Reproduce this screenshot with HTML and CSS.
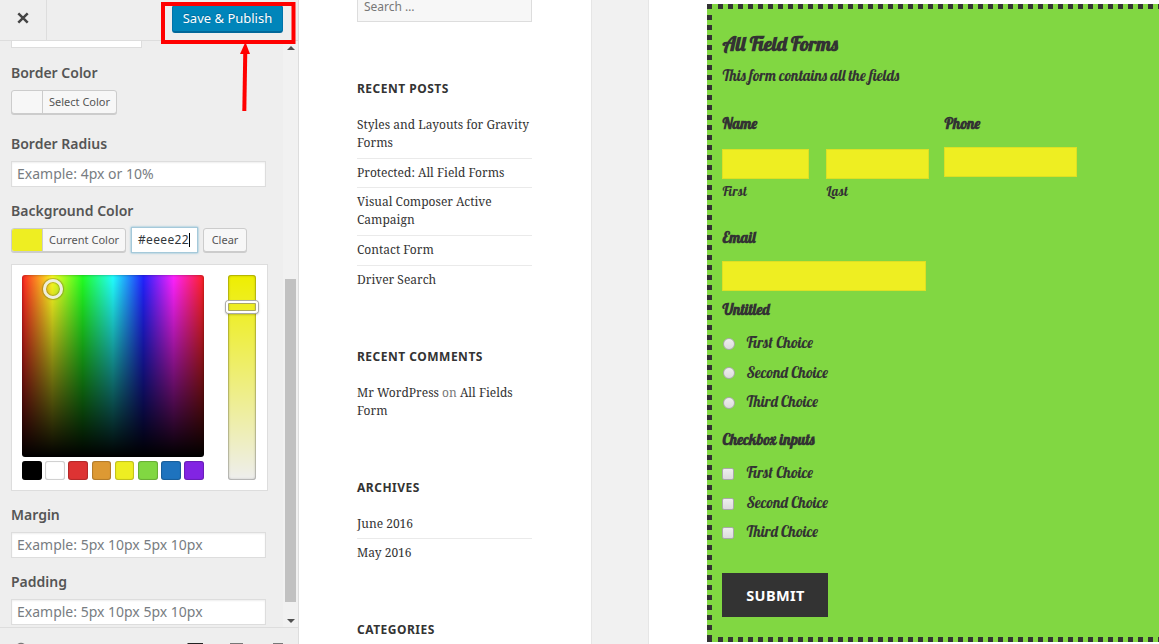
FILE: index.html
```
<!DOCTYPE html>
<html lang="en">
<head>
<meta charset="utf-8">
<title>Customizer</title>
<link rel="stylesheet" href="styles.css">
</head>
<body>
<div class="app">
  <aside class="panel">
    <header class="panel-head">
      <div class="close"><svg width="12" height="12" viewBox="0 0 12 12"><path d="M1.3 1.3 10.7 10.7M10.7 1.3 1.3 10.7" stroke="#444" stroke-width="2.5"/></svg></div>
      <button class="save">Save &amp; Publish</button>
    </header>
    <div class="panel-body">
      <div class="controls">
        <div class="select-end"></div>
        <div class="label l1">Border Color</div>
        <div class="color-row"><div class="color-btn"><i class="chip"></i><span>Select Color</span></div></div>
        <div class="label l2">Border Radius</div>
        <div class="field">Example: 4px or 10%</div>
        <div class="label l3">Background Color</div>
        <div class="color-row">
          <div class="color-btn current"><i class="chip yellow"></i><span>Current Color</span></div>
          <div class="hex">#eeee22<i class="caret"></i></div>
          <div class="clear">Clear</div>
        </div>
        <div class="picker">
          <div class="picker-left">
            <div class="square"><i class="handle"></i></div>
            <div class="palette">
              <i class="c-black"></i><i class="c-white"></i><i class="c-red"></i><i class="c-orange"></i><i class="c-yellow"></i><i class="c-green"></i><i class="c-blue"></i><i class="c-purple"></i>
            </div>
          </div>
          <div class="strip"><i class="slider"></i></div>
        </div>
        <div class="label l4">Margin</div>
        <div class="field">Example: 5px 10px 5px 10px</div>
        <div class="label l5">Padding</div>
        <div class="field">Example: 5px 10px 5px 10px</div>
      </div>
      <div class="scrollbar">
        <svg class="up" width="8" height="4" viewBox="0 0 8 4"><path d="M0 4 4 0 8 4Z" fill="#505050"/></svg>
        <div class="thumb"></div>
        <svg width="8" height="4" viewBox="0 0 8 4"><path d="M0 0H8L4 4Z" fill="#505050"/></svg>
      </div>
    </div>
    <footer class="panel-foot">
      <svg width="298" height="16" viewBox="0 0 298 16"><path d="M17.5 16Q21 13.5 24.5 16Z" fill="#777"/><path d="M187.5 15H203V16H187.5Z" fill="#222"/><path d="M230 15H243V16H230Z" fill="#777"/><path d="M273 15H283V16H273Z" fill="#777"/></svg>
    </footer>
  </aside>
  <section class="sidebar">
    <div class="search">Search …</div>
    <h2 class="t1">Recent Posts</h2>
    <ul>
      <li>Styles and Layouts for Gravity<br>Forms</li>
      <li>Protected: All Field Forms</li>
      <li>Visual Composer Active<br>Campaign</li>
      <li>Contact Form</li>
      <li>Driver Search</li>
    </ul>
    <h2 class="t2">Recent Comments</h2>
    <ul><li>Mr WordPress <em>on</em> All Fields<br>Form</li></ul>
    <h2 class="t3">Archives</h2>
    <ul class="archives"><li>June 2016</li><li>May 2016</li></ul>
    <h2 class="t4">Categories</h2>
  </section>
  <div class="gutter"></div>
  <main class="content">
    <form class="gform">
      <h3>All Field Forms</h3>
      <p class="desc">This form contains all the fields</p>
      <div class="names">
        <div class="name-group">
          <div class="flabel">Name</div>
          <div class="pair">
            <div class="first"><div class="box"></div><div class="sub">First</div></div>
            <div class="last"><div class="box"></div><div class="sub">Last</div></div>
          </div>
        </div>
        <div class="phone">
          <div class="flabel">Phone</div>
          <div class="box"></div>
        </div>
      </div>
      <div class="flabel email-label">Email</div>
      <div class="box email"></div>
      <div class="flabel untitled">Untitled</div>
      <div class="choices">
        <div><i class="radio"></i><span>First Choice</span></div>
        <div><i class="radio"></i><span>Second Choice</span></div>
        <div><i class="radio"></i><span>Third Choice</span></div>
      </div>
      <div class="flabel checks-label">Checkbox inputs</div>
      <div class="choices">
        <div><i class="check"></i><span>First Choice</span></div>
        <div><i class="check"></i><span>Second Choice</span></div>
        <div><i class="check"></i><span>Third Choice</span></div>
      </div>
      <div class="submit">SUBMIT</div>
    </form>
  </main>
  <svg class="annotation" width="300" height="120" viewBox="0 0 300 120">
    <rect x="163" y="4" width="130.5" height="38" fill="none" stroke="#f00" stroke-width="4"/>
    <path d="M245.3 50 244.3 111" stroke="#f00" stroke-width="4"/>
    <path d="M245.4 42 250 54H240Z" fill="#f00"/>
  </svg>
</div>
</body>
</html>
```
FILE: styles.css
```
* { box-sizing: border-box; }
body { margin: 0; overflow: hidden; background: #fff; font-family: "Noto Sans", sans-serif; }
i { display: block; font-style: normal; }
.app { position: relative; display: flex; width: 1159px; height: 644px; overflow: hidden; }
.annotation { position: absolute; left: 0; top: 0; }

.panel { width: 299px; flex: none; height: 644px; display: flex; flex-direction: column; background: #eee; border-right: 1px solid #ddd; color: #555; }
.panel-head { height: 41px; flex: none; display: flex; justify-content: space-between; border-bottom: 1px solid #ddd; padding-right: 15px; }
.close { width: 47px; border-right: 1px solid #ddd; display: flex; align-items: center; justify-content: center; padding: 0 0 4px; }
.save { width: 111px; height: 28px; margin-top: 5px; padding: 0 0 2px; background: #0085ba; border: 1px solid #0073aa; border-bottom: 2px solid #006799; border-radius: 3px; color: #fff; font: 13px/24px "Noto Sans", sans-serif; text-shadow: 0 -1px 1px #006799; white-space: nowrap; }
.panel-body { height: 586px; flex: none; display: flex; justify-content: space-between; overflow: hidden; }
.controls { padding-left: 11px; }
.select-end { width: 131px; height: 7px; border: 1px solid #ddd; border-top: 0; background: #fff; }
.label { height: 20px; font: 600 14px/20px "Noto Sans", sans-serif; white-space: nowrap; }
.l1 { margin: 15px 0 6px; }
.l2 { margin: 19px 0 7px; }
.l3 { margin: 14px 0 6px; }
.l4 { margin: 14px 0 7px; }
.l5 { margin: 14px 0 7px; }
.field { width: 255px; height: 26px; padding: 0 5px; background: #fff; border: 1px solid #ddd; box-shadow: inset 0 1px 2px rgba(0,0,0,.07); color: #787d82; font-size: 14px; line-height: 24px; white-space: nowrap; }
.color-row { display: flex; height: 26px; align-items: center; }
.color-btn { width: 106px; height: 24px; display: flex; border: 1px solid #ccc; border-radius: 3px; background: #f7f7f7; box-shadow: 0 1px 0 #ccc; overflow: hidden; font-size: 11px; line-height: 22px; }
.current { width: 115px; }
.chip { width: 31px; border-right: 1px solid #ccc; }
.yellow { background: #eeee22; }
.color-btn span { padding-left: 6px; white-space: nowrap; }
.hex { display: flex; align-items: center; width: 67px; height: 26px; margin-left: 5px; padding: 0 0 1px 6px; background: #fff; border: 1px solid #a5c9da; box-shadow: 0 0 2px rgba(30,140,190,.6); color: #32373c; font-size: 12px; letter-spacing: .35px; }
.caret { width: 1px; height: 14px; background: #000; }
.clear { width: 44px; height: 24px; margin-left: 5px; border: 1px solid #ccc; border-radius: 3px; background: #f7f7f7; box-shadow: 0 1px 0 #ccc; font-size: 11px; line-height: 22px; text-align: center; }
.picker { width: 257px; height: 227px; margin-top: 11px; padding: 10px; display: flex; gap: 24px; background: #fff; border: 1px solid #ddd; }
.picker-left { width: 182px; }
.square { position: relative; width: 182px; height: 182px; border-radius: 3px; background: linear-gradient(transparent, #000), linear-gradient(to right, #ff2222, #ffff22 16.67%, #22ff22 33.33%, #22ffff 50%, #2222ff 66.67%, #ff22ff 83.33%, #ff2222); box-shadow: inset 0 0 3px rgba(0,0,0,.4); }
.handle { position: absolute; left: 21px; top: 4px; width: 20px; height: 20px; border: 3px solid #eeeedd; border-radius: 50%; box-shadow: 0 0 1px 1px rgba(120,110,40,.5), inset 0 0 1px 1px rgba(120,110,40,.5); }
.palette { display: flex; justify-content: space-between; margin-top: 4px; }
.palette i { width: 19.6px; height: 19px; border-radius: 3px; box-shadow: inset 0 0 0 1px rgba(0,0,0,.12), inset 0 0 2px rgba(0,0,0,.25); }
.c-black { background: #000; } .c-white { background: #fff; } .c-red { background: #dd3333; } .c-orange { background: #dd9933; }
.c-yellow { background: #eeee22; } .c-green { background: #81d742; } .c-blue { background: #1e73be; } .c-purple { background: #8224e3; }
.strip { position: relative; width: 28px; height: 205px; border-radius: 3px; background: linear-gradient(#eeee00, #eeeeee); box-shadow: inset 0 0 0 1px rgba(0,0,0,.12), inset 0 0 3px rgba(0,0,0,.35); }
.slider { position: absolute; left: -2px; top: 26px; width: 32px; height: 12px; border: 2px solid #fff; border-radius: 3px; box-shadow: 0 0 0 1px #aaa, 0 1px 2px 1px rgba(0,0,0,.2), inset 0 0 0 1px #aaa864; }
.scrollbar { width: 15px; display: flex; flex-direction: column; align-items: center; background: #f1f1f1; }
.up { margin-top: 5px; }
.thumb { width: 11px; height: 323px; margin: 229px 0 17px; flex: none; background: #c1c1c1; }
.panel-foot { height: 17px; flex: none; border-top: 1px solid #ddd; }
.panel-foot svg { display: block; }

.sidebar { width: 292px; flex: none; padding-left: 58px; color: #333; }
.search { width: 175px; height: 22px; padding-left: 6px; border: 1px solid #ddd; border-top: 0; background: #f7f7f7; color: #777; font-size: 12px; line-height: 13px; }
h2 { margin: 0; height: 18px; font: 700 12px/18px "Noto Sans", sans-serif; letter-spacing: .5px; text-transform: uppercase; }
.t1 { margin-top: 58px; } .t2 { margin-top: 59.2px; } .t3 { margin-top: 59px; } .t4 { margin-top: 59px; }
ul { list-style: none; margin: 18px 0 0; padding: 0; width: 175px; }
li { font: 12px/18px "Noto Serif", "Liberation Serif", serif; white-space: nowrap; padding: 5.1px 0 5.6px; }
.archives li { padding: 5px 0 5px; }
li + li { border-top: 1px solid #eaeaea; }
li:first-child, .archives li:first-child { padding-top: 0; }
li:last-child, .archives li:last-child { padding-bottom: 0; }
em { font-style: normal; color: #777; }
.gutter { width: 58px; flex: none; background: #f1f1f1; border: solid #e6e6e6; border-width: 0 1px; }

.content { padding: 4px 0 0 58px; flex: none; }
.gform { width: 460px; height: 638px; padding: 28px 0 0 15px; color: #333; background:
  linear-gradient(#333,#333) 0 0 / 5px 5px no-repeat,
  repeating-linear-gradient(#333 0 5px, transparent 5px 10px) 0 11px / 5px 622px no-repeat,
  linear-gradient(#333,#333) 0 631px / 5px 7px no-repeat,
  repeating-linear-gradient(to right, #333 0 5px, transparent 5px 10px) 11px 0 / 449px 5px no-repeat,
  repeating-linear-gradient(to right, #333 0 5px, transparent 5px 10px) 11px 633px / 449px 5px no-repeat,
  #81d742; font-family: Lobster, "Liberation Serif", serif; }
h3 { margin: 0; padding-left: .5px; font-size: 20px; font-weight: 700; line-height: 24px; height: 24px; }
.desc { margin: 10px 0 0; padding-left: .4px; height: 20px; font-size: 15px; line-height: 20px; }
.names { display: flex; margin-top: 27px; }
.name-group { width: 222px; }
.flabel { height: 20px; padding-left: .5px; font-size: 15px; font-weight: 700; line-height: 22px; }
.pair { display: flex; gap: 17px; margin-top: 16px; }
.first { width: 87px; } .last { width: 103px; }
.box { height: 30px; background: #eeee22; border: 1px solid #dde024; }
.sub { padding-left: .4px; font-size: 13px; letter-spacing: .4px; line-height: 18px; height: 18px; margin-top: 3px; }
.phone .box { width: 133px; margin-top: 14px; }
.email-label { margin-top: 27px; }
.email { width: 204px; margin-top: 14px; }
.untitled { margin-top: 8px; }
.choices { margin-top: 9px; }
.choices div { display: flex; align-items: center; height: 29.5px; font-size: 15px; }
.choices span { margin-left: 12.5px; }
.radio { width: 12px; height: 12px; margin: 2px -1px 0 1px; border-radius: 50%; border: 1px solid #a9a9a9; background: linear-gradient(#eee, #dcdcdc); }
.check { width: 12px; height: 12px; margin-top: 3px; border-radius: 2px; border: 1px solid #a9a9a9; background: linear-gradient(#eee, #dcdcdc); }
.checks-label { margin-top: 12.4px; }
.submit { width: 106px; height: 44px; margin-top: 26.6px; padding-left: 1px; background: #333; color: #fff; font: normal 700 14.5px/45px "Noto Sans", sans-serif; letter-spacing: .4px; text-align: center; }
```
